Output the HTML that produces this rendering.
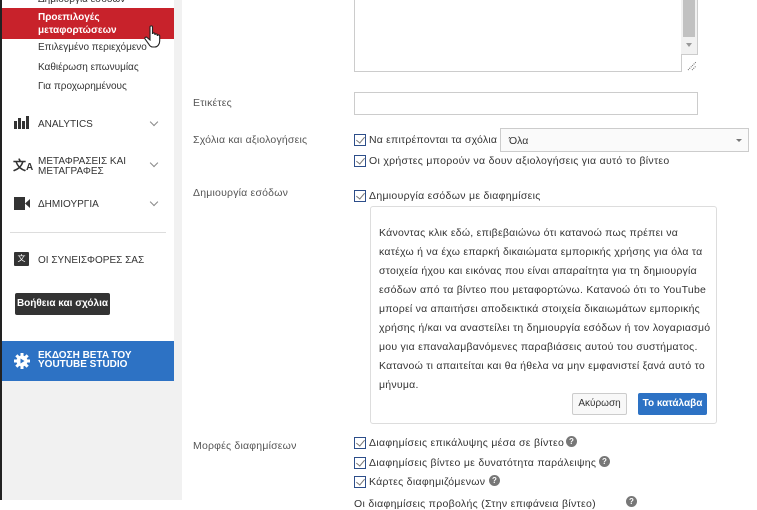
<!DOCTYPE html>
<html><head><meta charset="utf-8"><style>
*{box-sizing:border-box;margin:0;padding:0}
body{width:757px;height:500px;overflow:hidden;background:#fff;font-family:"Liberation Sans","DejaVu Sans",sans-serif;position:relative;color:#333}
.a{position:absolute;white-space:nowrap}
.side{position:absolute;left:0;top:0;width:174px;height:500px;background:#fff;border-left:2px solid #222}
.gap{position:absolute;left:174px;top:0;width:8px;height:500px;background:#f1f1f1}
.sidegray{position:absolute;left:2px;top:381px;width:172px;height:119px;background:#f1f1f1}
.it{font-size:10px;color:#333;left:38px}
.nav{font-size:10px;color:#333;left:38px;line-height:10px}
.chev{width:6px;height:6px;border-right:1.5px solid #888;border-bottom:1.5px solid #888;transform:rotate(45deg);left:151px}
.lab{font-size:10.5px;color:#555;left:193px;letter-spacing:.2px}
.cb{width:12px;height:12px;border:1px solid #2d4e8a;background:#fff;left:354px}
.cb:after{content:"";position:absolute;left:3px;top:0px;width:4px;height:7px;border-right:1.5px solid #777;border-bottom:1.5px solid #777;transform:rotate(40deg)}
.ct{font-size:10.5px;color:#333;left:369px;letter-spacing:.3px}
.q{width:11px;height:11px;border-radius:50%;background:#777;color:#fff;font-size:8px;font-weight:bold;text-align:center;line-height:11px}
</style></head><body>
<div class="side"></div>
<div class="sidegray"></div>
<div class="gap"></div>
<div class="a it" style="top:-6px">Δημιουργία εσόδων</div>
<div class="a" style="left:2px;top:8px;width:172px;height:31px;background:#c8222b"></div>
<div class="a" style="left:38px;top:11px;font-size:10px;color:#fff;font-weight:bold;line-height:13px">Προεπιλογές<br>μεταφορτώσεων</div>
<svg class="a" style="left:144px;top:25px" width="20" height="24" viewBox="0 0 20 24"><path d="M6 2c0-1.5 2.5-1.5 2.5 0v7c0-1.4 2.4-1.4 2.4 0v1c0-1.4 2.4-1.4 2.4 0v1c0-1.4 2.4-1.4 2.4 0v5c0 3-2 6-5 6h-2c-2 0-3-1-4-3L1 14c-.8-1.3 1-2.5 2-1.5L6 15z" fill="#fff" stroke="#222" stroke-width="1.1"/></svg>
<div class="a it" style="top:42px">Επιλεγμένο περιεχόμενο</div>
<div class="a it" style="top:62px">Καθιέρωση επωνυμίας</div>
<div class="a it" style="top:81px">Για προχωρημένους</div>
<svg class="a" style="left:14px;top:116px" width="16" height="13"><rect x="0" y="5" width="3" height="8" fill="#333"/><rect x="4" y="2" width="3" height="11" fill="#333"/><rect x="8" y="5" width="3" height="8" fill="#333"/><rect x="12" y="0" width="3" height="13" fill="#333"/></svg>
<div class="a nav" style="top:120px">ANALYTICS</div>
<div class="a chev" style="top:119px"></div>
<div class="a" style="left:13px;top:155px;font-size:13px;color:#333;font-weight:bold">文<span style="font-size:10px">A</span></div>
<div class="a nav" style="top:157px">ΜΕΤΑΦΡΑΣΕΙΣ ΚΑΙ<br>ΜΕΤΑΓΡΑΦΕΣ</div>
<div class="a chev" style="top:160px"></div>
<svg class="a" style="left:14px;top:197px" width="16" height="13"><rect x="0" y="0" width="11" height="13" fill="#333"/><path d="M11 6.5L16 2v9z" fill="#333"/></svg>
<div class="a nav" style="top:200px">ΔΗΜΙΟΥΡΓΙΑ</div>
<div class="a chev" style="top:199px"></div>
<div class="a" style="left:10px;top:232px;width:156px;height:1px;background:#ddd"></div>
<div class="a" style="left:14px;top:252px;width:15px;height:14px;background:#333;border-radius:1px;color:#fff;font-size:8px;text-align:center;line-height:14px">文</div>
<div class="a nav" style="top:256px">ΟΙ ΣΥΝΕΙΣΦΟΡΕΣ ΣΑΣ</div>
<div class="a" style="left:15px;top:293px;width:95px;height:22px;background:#333;border-radius:2px;color:#fff;font-size:10px;font-weight:bold;text-align:center;line-height:22px">Βοήθεια και σχόλια</div>
<div class="a" style="left:2px;top:341px;width:172px;height:40px;background:#2d72c4"></div>
<svg class="a" style="left:14px;top:353px" width="16" height="16" viewBox="0 0 16 16"><g fill="#fff"><circle cx="8" cy="8" r="5.5"/><rect x="6.5" y="0" width="3" height="16"/><rect x="0" y="6.5" width="16" height="3"/><rect x="6.5" y="0" width="3" height="16" transform="rotate(45 8 8)"/><rect x="6.5" y="0" width="3" height="16" transform="rotate(-45 8 8)"/></g><path d="M6.5 5.5v5l4-2.5z" fill="#2d72c4"/></svg>
<div class="a" style="left:38px;top:351px;font-size:10px;color:#fff;font-weight:bold;line-height:9px">ΕΚΔΟΣΗ BETA ΤΟΥ<br>YOUTUBE STUDIO</div>

<div class="a" style="left:354px;top:-2px;width:344px;height:74px;border:1px solid #ccc"></div>
<div class="a" style="left:681px;top:0;width:16px;height:54px;background:#f1f1f1"></div>
<div class="a" style="left:683px;top:0;width:12px;height:37px;background:#c1c1c1"></div>
<div class="a" style="left:686px;top:43px;width:0;height:0;border-left:3px solid transparent;border-right:3px solid transparent;border-top:4px solid #999"></div>
<div class="a" style="left:681px;top:54px;width:17px;height:18px;border-left:1px solid #ccc;border-top:1px solid #ccc;background:#fff"></div>
<svg class="a" style="left:687px;top:61px" width="10" height="10"><path d="M1 9L9 1M5 9L9 5" stroke="#666" stroke-width="1" stroke-dasharray="1 1"/></svg>
<div class="a" style="left:354px;top:92px;width:344px;height:23px;border:1px solid #ccc"></div>

<div class="a lab" style="top:97px">Ετικέτες</div>
<div class="a lab" style="top:134px">Σχόλια και αξιολογήσεις</div>
<div class="a lab" style="top:187px">Δημιουργία εσόδων</div>
<div class="a lab" style="top:440px">Μορφές διαφημίσεων</div>

<div class="a cb" style="top:134px"></div>
<div class="a ct" style="top:134px;letter-spacing:.2px">Να επιτρέπονται τα σχόλια</div>
<div class="a" style="left:500px;top:128px;width:249px;height:24px;border:1px solid #ccc;background:#fafafa;font-size:10.5px;padding:6px 0 0 8px">Όλα</div>
<div class="a" style="left:736px;top:139px;border-left:3px solid transparent;border-right:3px solid transparent;border-top:3px solid #777"></div>
<div class="a cb" style="top:155px"></div>
<div class="a ct" style="top:155px">Οι χρήστες μπορούν να δουν αξιολογήσεις για αυτό το βίντεο</div>
<div class="a cb" style="top:190px"></div>
<div class="a ct" style="top:190px">Δημιουργία εσόδων με διαφημίσεις</div>

<div class="a" style="left:370px;top:206px;width:347px;height:218px;border:1px solid #ddd;border-radius:3px;background:#fff"></div>
<div class="a" style="left:379px;top:224px;font-size:10.5px;line-height:19px;color:#333;letter-spacing:.25px">Κάνοντας κλικ εδώ, επιβεβαιώνω ότι κατανοώ πως πρέπει να<br>κατέχω ή να έχω επαρκή δικαιώματα εμπορικής χρήσης για όλα τα<br>στοιχεία ήχου και εικόνας που είναι απαραίτητα για τη δημιουργία<br>εσόδων από τα βίντεο που μεταφορτώνω. Κατανοώ ότι το YouTube<br>μπορεί να απαιτήσει αποδεικτικά στοιχεία δικαιωμάτων εμπορικής<br>χρήσης ή/και να αναστείλει τη δημιουργία εσόδων ή τον λογαριασμό<br>μου για επαναλαμβανόμενες παραβιάσεις αυτού του συστήματος.<br>Κατανοώ τι απαιτείται και θα ήθελα να μην εμφανιστεί ξανά αυτό το<br>μήνυμα.</div>
<div class="a" style="left:572px;top:393px;width:55px;height:22px;border:1px solid #ccc;border-radius:2px;background:#f8f8f8;font-size:10px;text-align:center;line-height:20px">Ακύρωση</div>
<div class="a" style="left:638px;top:393px;width:69px;height:22px;border-radius:2px;background:#2d72c4;color:#fff;font-size:10px;font-weight:bold;text-align:center;line-height:22px">Το κατάλαβα</div>

<div class="a cb" style="top:437px"></div>
<div class="a ct" style="top:437px">Διαφημίσεις επικάλυψης μέσα σε βίντεο</div>
<div class="a q" style="left:566px;top:436px">?</div>
<div class="a cb" style="top:457px"></div>
<div class="a ct" style="top:457px">Διαφημίσεις βίντεο με δυνατότητα παράλειψης</div>
<div class="a q" style="left:599px;top:456px">?</div>
<div class="a cb" style="top:476px"></div>
<div class="a ct" style="top:476px">Κάρτες διαφημιζόμενων</div>
<div class="a q" style="left:489px;top:475px">?</div>
<div class="a ct" style="top:498px;left:354px">Οι διαφημίσεις προβολής (Στην επιφάνεια βίντεο)</div>
<div class="a q" style="left:626px;top:496px">?</div>
</body></html>
